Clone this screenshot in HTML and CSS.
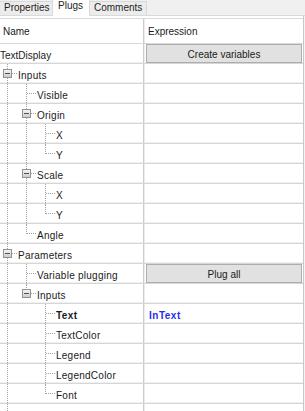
FILE: index.html
```html
<!DOCTYPE html>
<html>
<head>
<meta charset="utf-8">
<link rel="stylesheet" href="styles.css">
</head>
<body>
<div class="tabs">
  <div class="tab">Properties</div>
  <div class="tab active">Plugs</div>
  <div class="tab">Comments</div>
</div>
<div class="panel">
  <div class="row head"><div class="name"><span class="htxt">Name</span></div><div class="expr"><span class="htxt">Expression</span></div></div>

  <div class="row"><div class="name"><div class="tree"><span class="label root">TextDisplay</span></div></div><div class="expr"><div class="btn">Create variables</div></div></div>

  <div class="row"><div class="name"><div class="tree"><i class="c tee"><b class="box"></b></i><span class="label">Inputs</span></div></div><div class="expr"></div></div>
  <div class="row"><div class="name"><div class="tree"><i class="c pipe"></i><i class="c tee"></i><span class="label">Visible</span></div></div><div class="expr"></div></div>
  <div class="row"><div class="name"><div class="tree"><i class="c pipe"></i><i class="c tee"><b class="box"></b></i><span class="label">Origin</span></div></div><div class="expr"></div></div>
  <div class="row"><div class="name"><div class="tree"><i class="c pipe"></i><i class="c pipe"></i><i class="c tee"></i><span class="label">X</span></div></div><div class="expr"></div></div>
  <div class="row"><div class="name"><div class="tree"><i class="c pipe"></i><i class="c pipe"></i><i class="c ell"></i><span class="label">Y</span></div></div><div class="expr"></div></div>
  <div class="row"><div class="name"><div class="tree"><i class="c pipe"></i><i class="c tee"><b class="box"></b></i><span class="label">Scale</span></div></div><div class="expr"></div></div>
  <div class="row"><div class="name"><div class="tree"><i class="c pipe"></i><i class="c pipe"></i><i class="c tee"></i><span class="label">X</span></div></div><div class="expr"></div></div>
  <div class="row"><div class="name"><div class="tree"><i class="c pipe"></i><i class="c pipe"></i><i class="c ell"></i><span class="label">Y</span></div></div><div class="expr"></div></div>
  <div class="row"><div class="name"><div class="tree"><i class="c pipe"></i><i class="c ell"></i><span class="label">Angle</span></div></div><div class="expr"></div></div>

  <div class="row"><div class="name"><div class="tree"><i class="c tee"><b class="box"></b></i><span class="label">Parameters</span></div></div><div class="expr"></div></div>
  <div class="row"><div class="name"><div class="tree"><i class="c pipe"></i><i class="c tee"></i><span class="label">Variable plugging</span></div></div><div class="expr"><div class="btn">Plug all</div></div></div>
  <div class="row"><div class="name"><div class="tree"><i class="c pipe"></i><i class="c ell"><b class="box"></b></i><span class="label">Inputs</span></div></div><div class="expr"></div></div>
  <div class="row"><div class="name"><div class="tree"><i class="c pipe"></i><i class="c"></i><i class="c tee"></i><span class="label bold">Text</span></div></div><div class="expr"><span class="val">InText</span></div></div>
  <div class="row"><div class="name"><div class="tree"><i class="c pipe"></i><i class="c"></i><i class="c tee"></i><span class="label">TextColor</span></div></div><div class="expr"></div></div>
  <div class="row"><div class="name"><div class="tree"><i class="c pipe"></i><i class="c"></i><i class="c tee"></i><span class="label">Legend</span></div></div><div class="expr"></div></div>
  <div class="row"><div class="name"><div class="tree"><i class="c pipe"></i><i class="c"></i><i class="c tee"></i><span class="label">LegendColor</span></div></div><div class="expr"></div></div>
  <div class="row"><div class="name"><div class="tree"><i class="c pipe"></i><i class="c"></i><i class="c ell"></i><span class="label">Font</span></div></div><div class="expr"></div></div>
  <div class="row"><div class="name"><div class="tree"><i class="c pipe"></i></div></div><div class="expr"></div></div>
</div>
</body>
</html>
```

FILE: styles.css
```css
* { box-sizing: border-box; }
html, body {
  margin: 0;
  padding: 0;
}
body {
  width: 305px;
  height: 411px;
  overflow: hidden;
  background: #f4f4f4;
  font-family: "Liberation Sans", Arial, sans-serif;
  font-size: 10px;
  color: #1a1a1a;
}

/* tab strip */
.tabs {
  display: flex;
  align-items: flex-end;
  height: 16px;
  background: #f0f0f0;
  border-bottom: 1px solid #d9d9d9;
}
.tab {
  height: 14px;
  padding: 0 4px;
  line-height: 12px;
  background: #ececec;
  border: 1px solid #d9d9d9;
  border-bottom: none;
  color: #1e1e1e;
  margin-right: -1px;
}
.tab:first-child { border-left: none; width: 53px; }
.tab.active {
  height: 17px;
  margin-bottom: -1px;
  line-height: 12px;
  background: #ffffff;
  position: relative;
  z-index: 1;
  width: 38px;
  padding: 0 5px;
}

/* grid */
.panel {
  width: 304px;
  background: #ffffff;
  padding-top: 2px;
  border-right: 1px solid #c8c8c8;
}
.row {
  display: flex;
  height: 20px;
  border-bottom: 1px solid #d6d6d6;
  box-shadow: inset 0 -1px 0 #f0f0f0;
}
.row.head {
  height: 26px;
  border-top: 1px solid #dadada;
  border-bottom: 1px solid #d9d9d9;
  box-shadow: none;
}
.name {
  width: 144px;
  flex: none;
  border-right: 1px solid #cccccc;
  overflow: hidden;
}
.expr {
  flex: 1;
  padding: 0 1px 0 2px;
  box-shadow: inset 1px 0 0 #ececec;
  display: flex;
  align-items: flex-start;
}
.head .name, .head .expr { height: 100%; }
.htxt {
  display: block;
  padding: 2px 0 0 3px;
  line-height: 22px;
  font-size: 10px;
}
.head .expr .htxt { padding-left: 2px; }

.tree {
  display: flex;
  height: 19px;
  align-items: flex-start;
  margin-left: -1px;
}
.label {
  letter-spacing: 0.25px;
  line-height: 19px;
  margin-top: 2px;
  white-space: nowrap;
}
.label.root { letter-spacing: 0; padding-left: 1px; }
.label.bold { font-weight: bold; letter-spacing: 0.4px; }

/* tree connector columns */
.c {
  flex: none;
  width: 19px;
  height: 19px;
  position: relative;
  display: block;
}
.c.pipe::before,
.c.tee::before,
.c.ell::before {
  content: "";
  position: absolute;
  left: 8px;
  top: 0;
  height: 19px;
  border-left: 1px dotted #a2a2a2;
}
.c.ell::before { height: 10px; }
.c.tee::after,
.c.ell::after {
  content: "";
  position: absolute;
  left: 9px;
  top: 9px;
  width: 9px;
  border-top: 1px dotted #a2a2a2;
}
.box {
  position: absolute;
  left: 4px;
  top: 5px;
  width: 9px;
  height: 9px;
  border: 1px solid #929292;
  background: linear-gradient(#f4f4f4, #cdcdcd);
  z-index: 1;
}
.box::after {
  content: "";
  position: absolute;
  left: 1px;
  top: 3px;
  width: 5px;
  height: 1px;
  background: #45536d;
}

.btn {
  width: 100%;
  height: 19px;
  background: #e1e1e1;
  border: 1px solid #adadad;
  text-align: center;
  padding-top: 3px;
  line-height: 14px;
  color: #1a1a1a;
}
.val {
  color: #2b2bf0;
  font-weight: bold;
  letter-spacing: 0.5px;
  padding-left: 3px;
  line-height: 19px;
  margin-top: 2px;
}
```
